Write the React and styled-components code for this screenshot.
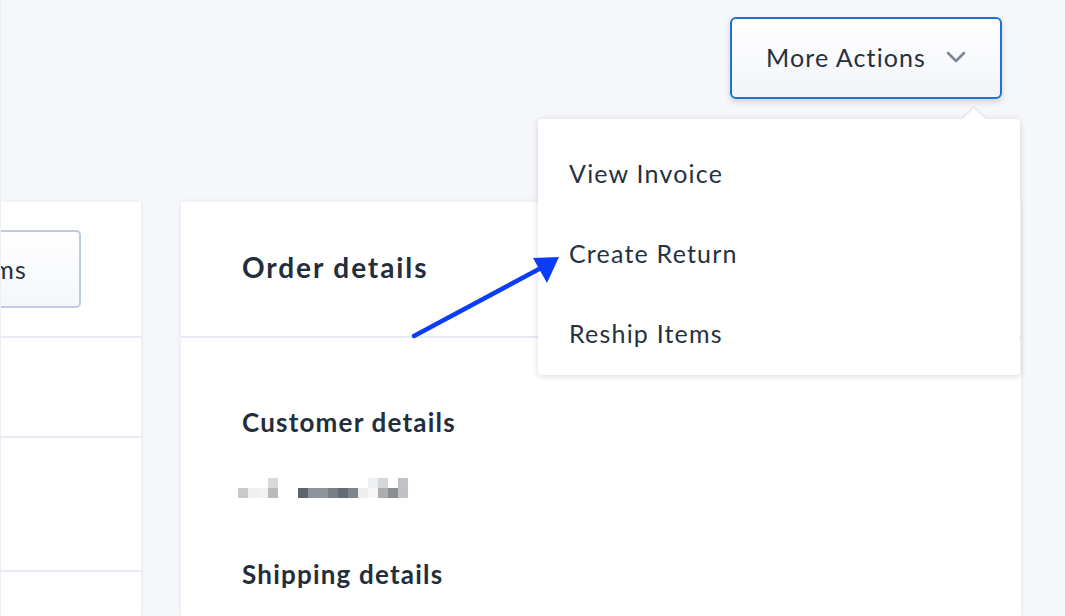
import styled, { createGlobalStyle } from 'styled-components';

const GlobalStyle = createGlobalStyle`
  html, body {
    margin: 0;
    padding: 0;
    background: #f6f7fb;
    font-family: 'Lato', 'Liberation Sans', sans-serif;
    color: #25303f;
  }
  * { box-sizing: border-box; }
`;

const Page = styled.div`
  position: relative;
  width: 1065px;
  height: 616px;
  overflow: hidden;
  background: #f6f7fb;
  border-left: 1px solid #eceef2;
`;

const TopBar = styled.div`
  height: 202px;
  display: flex;
  justify-content: flex-end;
  align-items: flex-start;
  padding: 17px 63px 0 0;
`;

const ActionsWrap = styled.div`
  position: relative;
`;

const ActionsButton = styled.button`
  width: 272px;
  height: 82px;
  display: flex;
  align-items: center;
  justify-content: space-between;
  padding: 0 34px 2px 34px;
  border: 2px solid #1b73d6;
  border-radius: 6px;
  background: linear-gradient(#ffffff, #f2f4f8);
  box-shadow: 0 3px 6px rgba(40, 50, 70, 0.18);
  font-family: inherit;
  font-size: 25px;
  letter-spacing: 1.1px;
  color: #25303f;
  cursor: pointer;
`;

const Menu = styled.div`
  position: absolute;
  top: 102px;
  right: -18px;
  width: 482px;
  padding: 14px 0 2px;
  background: #fff;
  border-radius: 4px;
  box-shadow: 0 1px 6px rgba(30, 40, 60, 0.18);
  z-index: 5;

  &::before {
    content: '';
    position: absolute;
    top: -8px;
    right: 38px;
    width: 16px;
    height: 16px;
    background: #fff;
    transform: rotate(45deg);
    box-shadow: -1px -1px 2px rgba(30, 40, 60, 0.1);
  }
`;

const MenuItem = styled.div`
  position: relative;
  height: 80px;
  display: flex;
  align-items: center;
  padding-left: 31px;
  font-size: 25px;
  letter-spacing: 1.2px;
  color: #26313f;
`;

const Columns = styled.div`
  display: grid;
  grid-template-columns: 140px 840px;
  column-gap: 40px;
  height: 414px;
`;

const LeftPanel = styled.div`
  background: #fff;
  overflow: hidden;
  box-shadow: 1px 0 4px rgba(30, 40, 60, 0.06);
`;

const LeftTop = styled.div`
  height: 136px;
  padding-top: 28px;
  border-bottom: 2px solid #e4e9f2;
`;

const GhostButton = styled.div`
  width: 240px;
  height: 78px;
  margin-left: -160px;
  display: flex;
  align-items: center;
  justify-content: flex-end;
  padding-right: 52px;
  border: 2px solid #bccbe0;
  border-radius: 5px;
  background: linear-gradient(#ffffff, #f4f6fa);
  font-size: 25px;
  letter-spacing: 1.2px;
  color: #25303f;
`;

const LeftRow = styled.div`
  height: ${(p) => p.$h}px;
  border-bottom: 2px solid #e4e9f2;
`;

const Card = styled.div`
  background: #fff;
  box-shadow: 0 0 6px rgba(30, 40, 60, 0.08);
`;

const CardHeader = styled.div`
  height: 136px;
  display: flex;
  align-items: center;
  padding: 0 0 4px 61px;
  border-bottom: 2px solid #e4e9f2;
`;

const CardTitle = styled.h2`
  margin: 0;
  font-size: 28px;
  font-weight: 700;
  letter-spacing: 1.9px;
  color: #222e3c;
`;

const CardBody = styled.div`
  padding: 68px 61px 0;
`;

const SectionTitle = styled.h3`
  margin: 0;
  font-size: 26px;
  font-weight: 700;
  letter-spacing: 1.2px;
  color: #222e3c;
  line-height: 32px;
`;

const Redacted = styled.svg`
  display: block;
  margin: 40px 0 0 -4px;
`;

const Gap = styled.div`
  height: ${(p) => p.$h}px;
`;

const Arrow = styled.svg`
  position: absolute;
  left: 405px;
  top: 248px;
  z-index: 6;
  pointer-events: none;
`;

const pixels = [
  [268, 0, '#d8d9dc'],
  [368, 0, '#eeeff1'],
  [378, 0, '#d6d7da'],
  [398, 0, '#c0c2c5'],
  [238, 1, '#c8c9cb'],
  [248, 1, '#f0f0f0'],
  [258, 1, '#f2f2f2'],
  [268, 1, '#b9babd'],
  [298, 1, '#5d6670'],
  [308, 1, '#8e949a'],
  [318, 1, '#8f959b'],
  [328, 1, '#7a8088'],
  [338, 1, '#646b75'],
  [348, 1, '#7e858d'],
  [358, 1, '#edeef0'],
  [368, 1, '#f7f7f8'],
  [378, 1, '#acadb1'],
  [388, 1, '#8a8d92'],
  [398, 1, '#bfc1c4'],
];

const Chevron = () => (
  <svg width="20" height="12" viewBox="0 0 20 12">
    <path d="M2 2l8 8 8-8" fill="none" stroke="#7d8795" strokeWidth="2.6" strokeLinecap="round" strokeLinejoin="round" />
  </svg>
);

export default function App() {
  return (
    <>
      <GlobalStyle />
      <Page>
        <TopBar>
          <ActionsWrap>
            <ActionsButton>
              <span>More Actions</span>
              <Chevron />
            </ActionsButton>
            <Menu>
              <MenuItem>View Invoice</MenuItem>
              <MenuItem>Create Return</MenuItem>
              <MenuItem>Reship Items</MenuItem>
            </Menu>
          </ActionsWrap>
        </TopBar>
        <Columns>
          <LeftPanel>
            <LeftTop>
              <GhostButton>Items</GhostButton>
            </LeftTop>
            <LeftRow $h={100} />
            <LeftRow $h={134} />
          </LeftPanel>
          <Card>
            <CardHeader>
              <CardTitle>Order details</CardTitle>
            </CardHeader>
            <CardBody>
              <SectionTitle>Customer details</SectionTitle>
              <Redacted width="180" height="20" viewBox="238 0 180 20">
                {pixels.map(([x, r, c], i) => (
                  <rect key={i} x={x} y={r * 10} width="10" height="10" fill={c} />
                ))}
              </Redacted>
              <Gap $h={60} />
              <SectionTitle>Shipping details</SectionTitle>
            </CardBody>
          </Card>
        </Columns>
        <Arrow width="160" height="100" viewBox="405 248 160 100">
          <line x1="413" y1="336" x2="540" y2="268" stroke="#0b3cf7" strokeWidth="4.5" strokeLinecap="round" />
          <polygon points="558,257 532,258 546,283" fill="#0b3cf7" />
        </Arrow>
      </Page>
    </>
  );
}
